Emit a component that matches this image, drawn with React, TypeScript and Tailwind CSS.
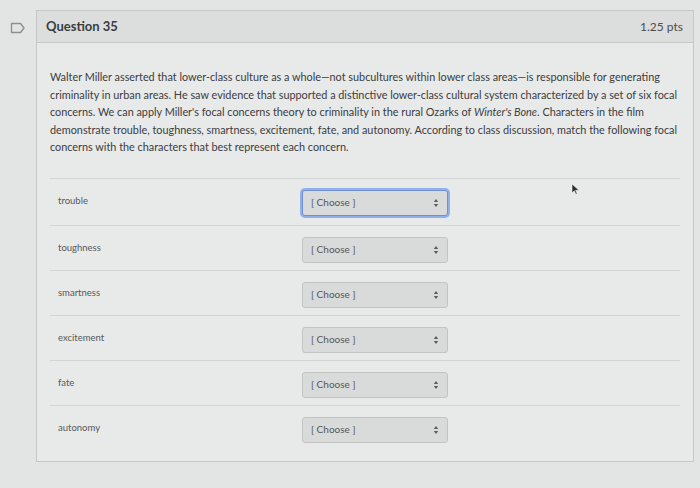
import React from "react";

const rows = ["trouble", "toughness", "smartness", "excitement", "fate", "autonomy"];

function FlagIcon() {
  return (
    <svg width="16" height="12" viewBox="0 0 16 12" fill="none">
      <path d="M1.5 1.5h9l3.5 4.5-3.5 4.5h-9z" stroke="#8e8f90" strokeWidth="1.4" strokeLinejoin="round" />
    </svg>
  );
}

function Select({ focused }: { focused?: boolean }) {
  return (
    <div
      className={`flex h-[26px] w-[146px] items-center justify-between rounded-[3px] border bg-[#d9dada] pl-2 pr-2 ${
        focused ? "border-[#6f8fd6] ring-2 ring-[#93aee8]" : "border-[#c2c3c3]"
      }`}
    >
      <span className="text-[10px] text-[#55585a]">[ Choose ]</span>
      <svg width="6" height="10" viewBox="0 0 6 10">
        <path d="M3 1l2.2 3H0.8z" fill="#5a5c5e" />
        <path d="M3 9L0.8 6h4.4z" fill="#5a5c5e" />
      </svg>
    </div>
  );
}

export default function App() {
  return (
    <div
      className="relative h-[488px] w-[700px] overflow-hidden bg-[#e3e4e4] text-[#3b3d3f]"
      style={{ fontFamily: "Lato, 'Noto Sans', sans-serif" }}
    >
      <div className="flex pt-[10px]">
        <div className="flex w-[36px] justify-center pt-[12px]">
          <FlagIcon />
        </div>
        <div className="flex h-[452px] w-[658px] flex-col border border-[#c6c7c7] bg-[#e8e9e9]">
          <div className="flex h-[32px] items-center justify-between border-b border-[#c6c7c7] bg-[#dcdddd] pl-[9px] pr-[10px]">
            <span className="text-[13px] font-bold text-[#3a3c3e]">Question 35</span>
            <span className="text-[12px] text-[#4a4c4e]">1.25 pts</span>
          </div>
          <div className="px-[13px] pt-[25px]">
            <p className="whitespace-nowrap text-[10.85px] leading-[17.6px] text-[#3b3d3f]">
              Walter Miller asserted that lower-class culture as a whole—not subcultures within lower class areas—is
              responsible for generating
              <br />
              criminality in urban areas. He saw evidence that supported a distinctive lower-class cultural system
              characterized by a set of six focal
              <br />
              concerns. We can apply Miller's focal concerns theory to criminality in the rural Ozarks of{" "}
              <i>Winter's Bone</i>. Characters in the film
              <br />
              demonstrate trouble, toughness, smartness, excitement, fate, and autonomy. According to class discussion,
              match the following focal
              <br />
              concerns with the characters that best represent each concern.
            </p>
            <div className="mt-[22px] border-t border-[#d2d3d3]">
              {rows.map((r, i) => (
                <div
                  key={r}
                  className={`flex items-start justify-between border-b border-[#d2d3d3] pl-[8px] ${
                    i === 0 ? "h-[47px]" : "h-[45px]"
                  } ${i === rows.length - 1 ? "border-b-0" : ""}`}
                >
                  <span className="w-[244px] pt-[15px] text-[9.5px] text-[#56595b]">{r}</span>
                  <div className="flex flex-1 items-start pt-[11px]">
                    <Select focused={i === 0} />
                  </div>
                </div>
              ))}
            </div>
          </div>
        </div>
      </div>
      <svg className="absolute left-[571px] top-[183px]" width="10" height="12" viewBox="0 0 10 12">
        <path d="M1 1v9l2.3-2.2 1.6 3.4 1.3-.6-1.6-3.3H8z" fill="#2b2c2e" stroke="#f4f4f4" strokeWidth="0.6" />
      </svg>
    </div>
  );
}
